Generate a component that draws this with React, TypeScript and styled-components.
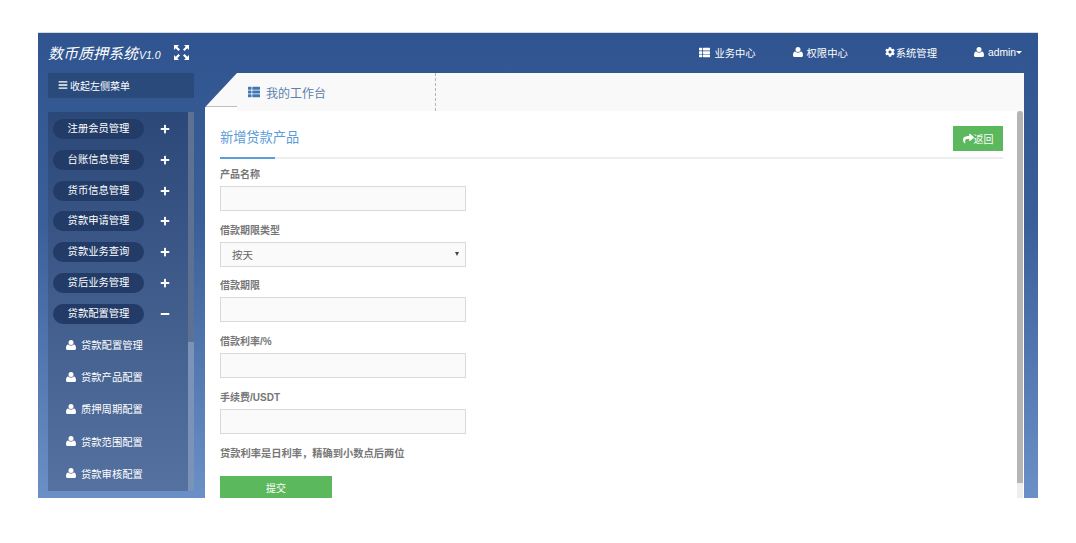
import { createGlobalStyle } from "styled-components";
import styled from "styled-components";
import { FaBars, FaCog, FaMinus, FaPlus, FaShare, FaThList } from "react-icons/fa";

const menus = ["注册会员管理", "台账信息管理", "货币信息管理", "贷款申请管理", "贷款业务查询", "贷后业务管理"];
const subMenus = ["贷款配置管理", "贷款产品配置", "质押周期配置", "贷款范围配置", "贷款审核配置"];

function ExpandIcon() {
  return (
    <svg width="15" height="15" viewBox="0 0 15 15" fill="#fff">
      <path d="M0 0h5L3.300 1.700 6 4.400 4.400 6 1.700 3.300 0 5z" />
      <path d="M15 0v5l-1.700-1.700L10.600 6 9 4.400l2.700-2.700L10 0z" />
      <path d="M0 15v-5l1.700 1.700L4.400 9 6 10.600l-2.700 2.700L5 15z" />
      <path d="M15 15h-5l1.700-1.700L9 10.600 10.600 9l2.700 2.700L15 10z" />
    </svg>
  );
}

function UserIcon({ size }: { size: number }) {
  return (
    <svg width={size} height={size} viewBox="0 0 12 12" fill="currentColor">
      <circle cx="6" cy="3" r="3" />
      <path d="M1.800 12h8.400c1 0 1.800-.7 1.800-1.800 0-2.400-.6-4.700-2.700-4.700-.6.6-1.900 1.300-3.300 1.300s-2.700-.7-3.300-1.300C.6 5.500 0 7.800 0 10.200 0 11.300.8 12 1.800 12z" />
    </svg>
  );
}

export default function App() {
  return (
    <>
      <GlobalStyle />
      <Page>
        <Frame>
          <Header>
            <Brand>
              <BrandTitle>
                数币质押系统<small>V1.0</small>
              </BrandTitle>
              <ExpandIcon />
            </Brand>
            <Nav>
              <NavItem>
                <FaThList size={11} />
                业务中心
              </NavItem>
              <NavItem>
                <UserIcon size={10} />
                权限中心
              </NavItem>
              <NavItem $tight>
                <FaCog size={10} />
                系统管理
              </NavItem>
              <NavItem>
                <UserIcon size={10} />
                admin
                <Caret />
              </NavItem>
            </Nav>
          </Header>
          <Body>
            <Sidebar>
              <Collapse>
                <FaBars size={10} />
                收起左侧菜单
              </Collapse>
              <MenuPanel>
                <MenuList>
                  {menus.map((m) => (
                    <MenuRow key={m}>
                      <Pill>{m}</Pill>
                      <Toggle>
                        <FaPlus size={10} />
                      </Toggle>
                    </MenuRow>
                  ))}
                  <MenuRow>
                    <Pill>贷款配置管理</Pill>
                    <Toggle>
                      <FaMinus size={10} />
                    </Toggle>
                  </MenuRow>
                  <SubList>
                    {subMenus.map((s) => (
                      <SubItem key={s}>
                        <UserIcon size={10} />
                        {s}
                      </SubItem>
                    ))}
                  </SubList>
                </MenuList>
                <SideTrack>
                  <SideThumb />
                </SideTrack>
              </MenuPanel>
            </Sidebar>
            <Main>
              <TabBar>
                <TabNotch />
                <Tab>
                  <FaThList size={12} />
                  我的工作台
                </Tab>
              </TabBar>
              <Card>
                <Content>
                  <TitleRow>
                    <Title>新增贷款产品</Title>
                    <BackButton>
                      <FaShare size={11} />
                      返回
                    </BackButton>
                  </TitleRow>
                  <Form>
                    <Field>
                      <Label>产品名称</Label>
                      <Input />
                    </Field>
                    <Field>
                      <Label>借款期限类型</Label>
                      <SelectBox>
                        按天
                        <SelectArrow />
                      </SelectBox>
                    </Field>
                    <Field>
                      <Label>借款期限</Label>
                      <Input />
                    </Field>
                    <Field>
                      <Label>借款利率/%</Label>
                      <Input />
                    </Field>
                    <Field>
                      <Label>手续费/USDT</Label>
                      <Input />
                    </Field>
                    <Hint>贷款利率是日利率，精确到小数点后两位</Hint>
                    <Submit>提交</Submit>
                  </Form>
                </Content>
                <CardTrack>
                  <CardThumb />
                </CardTrack>
              </Card>
            </Main>
          </Body>
        </Frame>
      </Page>
    </>
  );
}

const GlobalStyle = createGlobalStyle`
  html, body {
    margin: 0;
    background: #fff;
  }
  body {
    font-family: "Liberation Sans", "Noto Sans CJK SC", sans-serif;
  }
  * {
    box-sizing: border-box;
  }
`;

const Page = styled.div`
  padding: 32px 38px 45px;
`;

const Frame = styled.div`
  width: 1000px;
  height: 466px;
  overflow: hidden;
  display: flex;
  flex-direction: column;
  border-top: 1px solid #d8dbe0;
  background: linear-gradient(180deg, #2f548f 0%, #3a5f98 40%, #6b90c8 100%);
`;

const Header = styled.div`
  height: 40px;
  flex-shrink: 0;
  display: flex;
  align-items: center;
  justify-content: space-between;
  padding: 0 16px 2px 10px;
`;

const Brand = styled.div`
  display: flex;
  align-items: center;
  gap: 13px;
`;

const BrandTitle = styled.div`
  color: #fff;
  font-size: 15px;
  font-style: italic;
  small {
    font-size: 10.5px;
    margin-left: 1px;
  }
`;

const Nav = styled.div`
  display: flex;
  align-items: center;
  gap: 37px;
`;

const NavItem = styled.div<{ $tight?: boolean }>`
  display: flex;
  align-items: center;
  gap: ${({ $tight }) => ($tight ? 1 : 4)}px;
  color: #fff;
  font-size: 10.3px;
  white-space: nowrap;
`;

const Caret = styled.span`
  width: 0;
  height: 0;
  margin-left: -4px;
  border-left: 3px solid transparent;
  border-right: 3px solid transparent;
  border-top: 3px solid #fff;
`;

const Body = styled.div`
  flex: 1;
  min-height: 0;
  display: flex;
`;

const Sidebar = styled.div`
  width: 146px;
  margin-left: 10px;
  flex-shrink: 0;
`;

const Collapse = styled.div`
  height: 25px;
  display: flex;
  align-items: center;
  gap: 2px;
  padding: 0 0 1px 10px;
  background: #2a4a7c;
  color: #fff;
  font-size: 10px;
`;

const MenuPanel = styled.div`
  margin-top: 14px;
  height: 379px;
  display: flex;
  background: linear-gradient(180deg, #2b4879 0%, #54719f 100%);
`;

const MenuList = styled.div`
  flex: 1;
  padding: 7px 0 0 5px;
  overflow: hidden;
`;

const MenuRow = styled.div`
  height: 20px;
  margin-bottom: 10.8px;
  display: flex;
  align-items: center;
`;

const Pill = styled.div`
  width: 91px;
  height: 20px;
  border-radius: 10px;
  background: #223b67;
  color: #fff;
  font-size: 10.3px;
  line-height: 20px;
  text-align: center;
`;

const Toggle = styled.div`
  width: 41px;
  display: flex;
  justify-content: center;
  color: #fff;
  line-height: 0;
`;

const SubList = styled.div`
  display: flex;
  flex-direction: column;
  gap: 12.2px;
`;

const SubItem = styled.div`
  height: 20px;
  display: flex;
  align-items: center;
  gap: 5px;
  padding-left: 13px;
  color: #fff;
  font-size: 10.3px;
`;

const SideTrack = styled.div`
  width: 6px;
  background: #7b93b8;
`;

const SideThumb = styled.div`
  height: 230px;
  background: #5d7292;
`;

const Main = styled.div`
  width: 819px;
  margin-left: 11px;
  display: flex;
  flex-direction: column;
`;

const TabBar = styled.div`
  height: 38px;
  flex-shrink: 0;
  display: flex;
  background: #f9f9f9;
  background-clip: content-box;
  padding-left: 32px;
  position: relative;
`;

const TabNotch = styled.div`
  position: absolute;
  left: 0;
  top: 0;
  width: 32px;
  height: 38px;
  background: linear-gradient(180deg, #f9f9f9 0 33px, #bdbdbd 33px 34px, #fff 34px);
  clip-path: polygon(100% 0, 100% 100%, 0 100%, 0 90%);
`;

const Tab = styled.div`
  width: 199px;
  display: flex;
  align-items: center;
  gap: 6px;
  padding-left: 11px;
  border-right: 1px dashed #b5b5b5;
  color: #5a82ad;
  font-size: 12px;
  svg {
    color: #3f78b3;
  }
`;

const Card = styled.div`
  flex: 1;
  min-height: 0;
  display: flex;
  background: #fff;
`;

const Content = styled.div`
  flex: 1;
  padding: 15px 14px 0 15px;
  overflow: hidden;
`;

const TitleRow = styled.div`
  height: 33px;
  display: flex;
  align-items: flex-start;
  justify-content: space-between;
  border-bottom: 2px solid #eeeeee;
  position: relative;
  &::after {
    content: "";
    position: absolute;
    left: 0;
    bottom: -2px;
    width: 55px;
    height: 2px;
    background: #5a9fdc;
  }
`;

const Title = styled.div`
  color: #5a9bd8;
  font-size: 13.2px;
  line-height: 24px;
`;

const BackButton = styled.div`
  width: 50px;
  height: 25px;
  display: flex;
  align-items: center;
  justify-content: center;
  background: #5cb85c;
  color: #fff;
  font-size: 10px;
`;

const Form = styled.div`
  padding-top: 8px;
`;

const Field = styled.div`
  height: 55.7px;
`;

const Label = styled.div`
  height: 19px;
  line-height: 16px;
  color: #777;
  font-size: 10px;
  font-weight: bold;
`;

const Input = styled.div`
  width: 246px;
  height: 25px;
  background: #fafafa;
  border: 1px solid #d9d9d9;
`;

const SelectBox = styled(Input)`
  display: flex;
  align-items: center;
  justify-content: space-between;
  padding: 0 6px 0 11px;
  color: #666;
  font-size: 10.5px;
`;

const SelectArrow = styled.span`
  width: 0;
  height: 0;
  border-left: 2.5px solid transparent;
  border-right: 2.5px solid transparent;
  border-top: 4px solid #444;
`;

const Hint = styled.div`
  height: 31px;
  line-height: 18px;
  color: #777;
  font-size: 10.25px;
  font-weight: bold;
`;

const Submit = styled.div`
  width: 112px;
  height: 26px;
  line-height: 25px;
  text-align: center;
  background: #5cb85c;
  color: #fff;
  font-size: 10px;
`;

const CardTrack = styled.div`
  width: 6px;
  margin-right: 1px;
  background: #eeeeee;
`;

const CardThumb = styled.div`
  height: 372px;
  background: #b5b5b5;
  border-radius: 3px 3px 0 0;
`;
